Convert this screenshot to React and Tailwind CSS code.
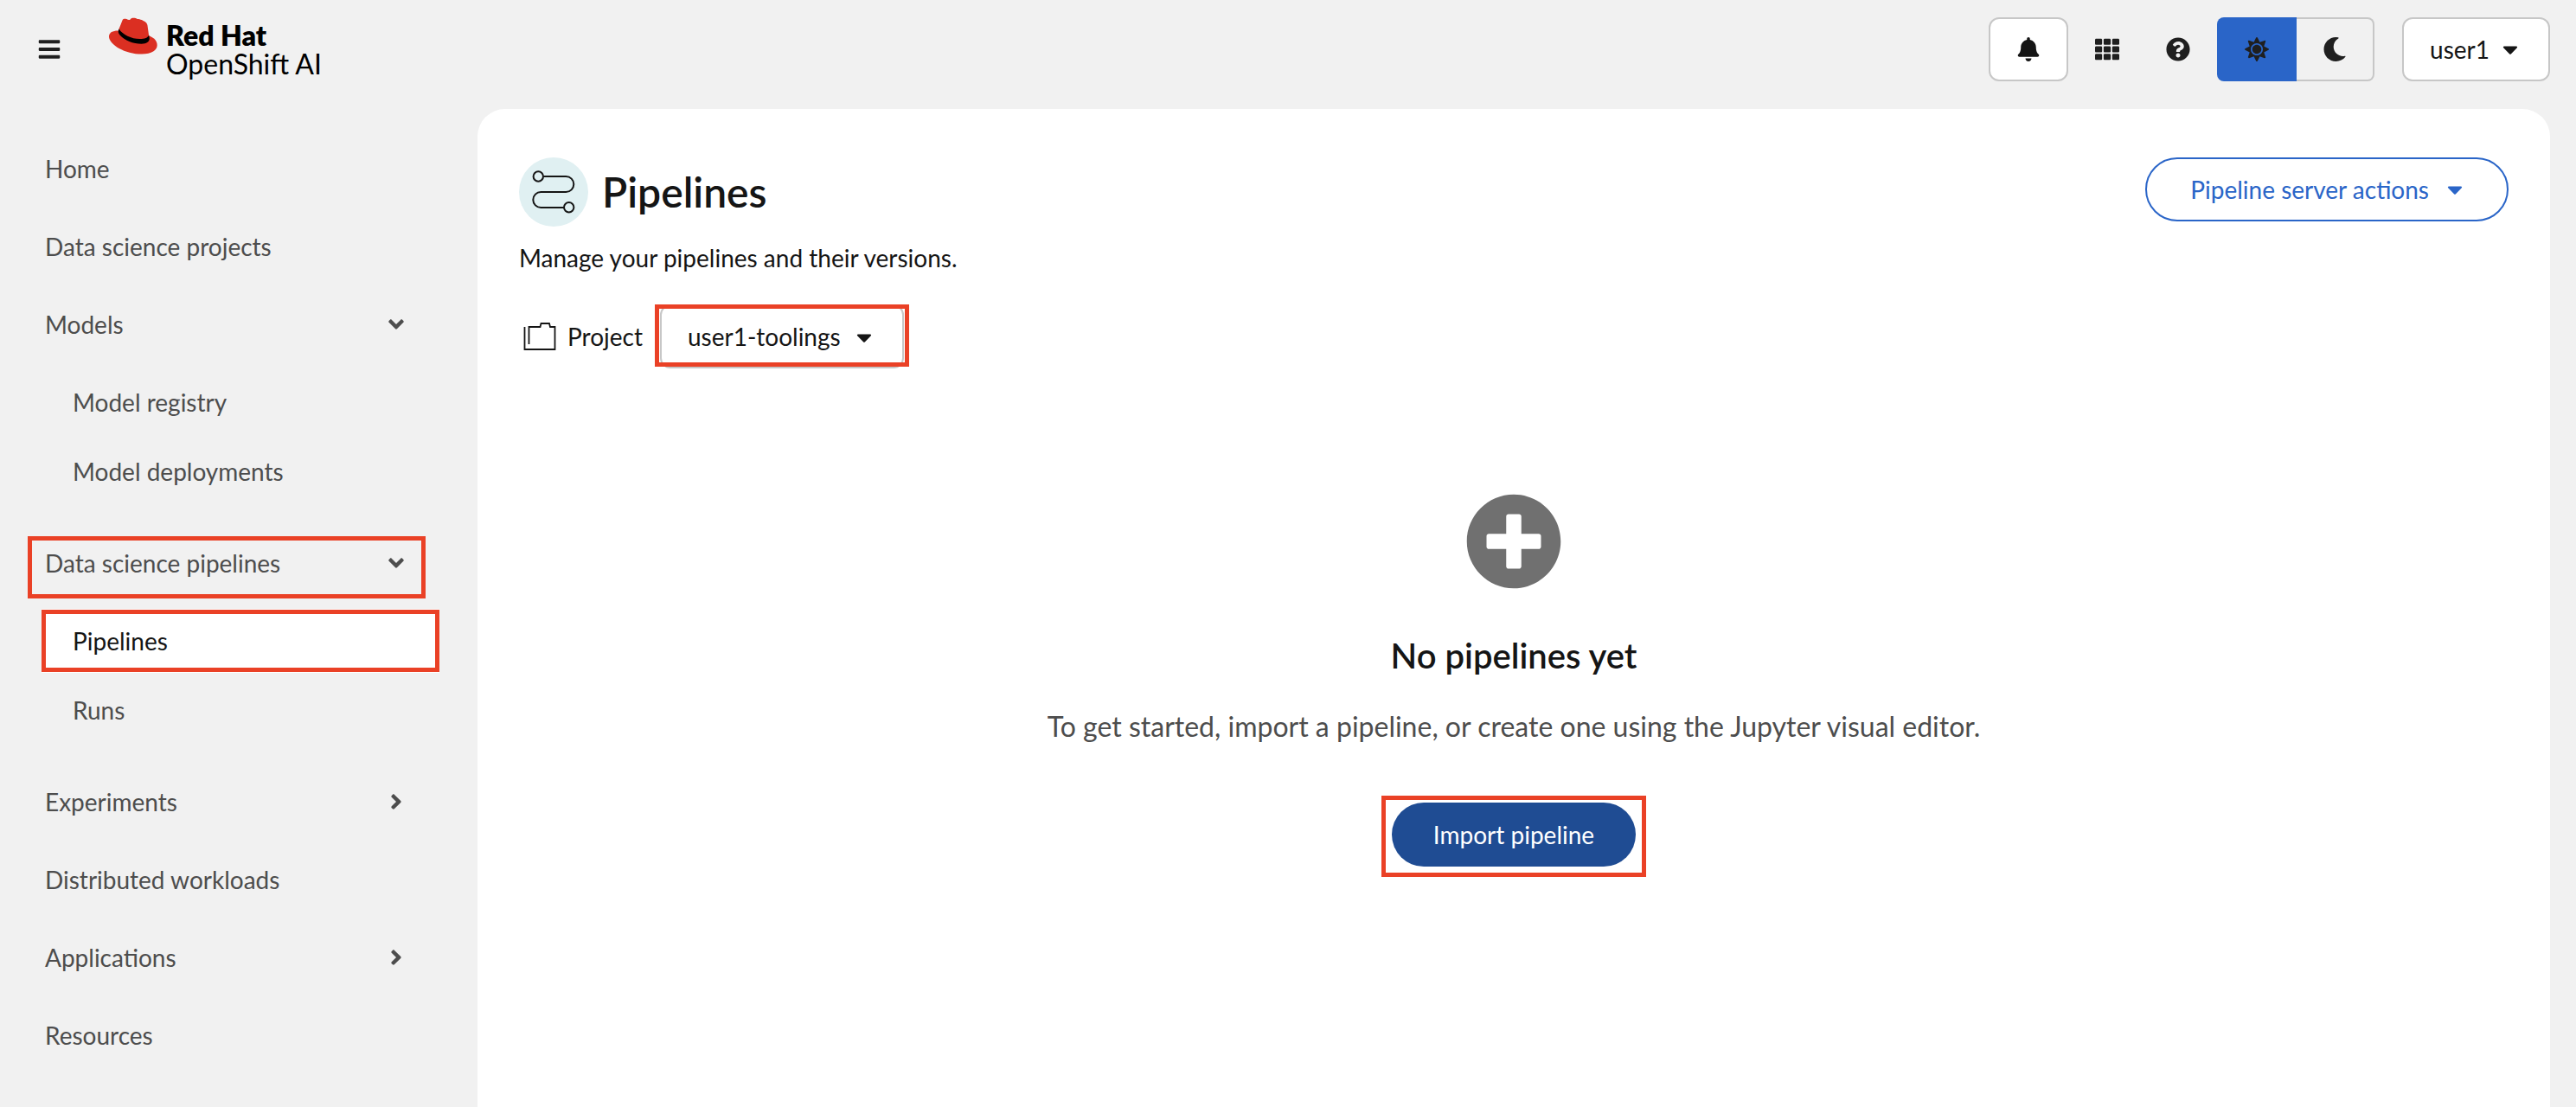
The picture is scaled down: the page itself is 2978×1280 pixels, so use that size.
import React from "react";
import {
  FaAngleDown,
  FaAngleRight,
  FaBars,
  FaBell,
  FaCaretDown,
  FaMoon,
  FaPlusCircle,
  FaQuestionCircle,
  FaSun,
  FaTh,
} from "react-icons/fa";

// Red frame drawn over an element to call attention to it.
function Highlight({ className }) {
  return (
    <span
      aria-hidden="true"
      className={`pointer-events-none absolute border-[5px] border-[#ea4126] ${className}`}
    />
  );
}

function RedHatLogo() {
  return (
    <a href="#home" className="flex gap-2.5 text-black" aria-label="Red Hat OpenShift AI">
      <svg viewBox="50 30 170 130" className="h-[43px] w-14" aria-hidden="true">
        <path
          fill="#db2f22"
          d="M84 77C66 76 50 82 50 97c0 28 56 62 115 62 35 0 54-13 54-31 0-16-11-26-27-33z"
        />
        <path
          fill="#db2f22"
          d="M84 73l8-20 5-13c4-7 10-5 15-4 5 3 8 4 12 2 3-6 9-7 16-6 5 0 7 3 10 4 4-1 8 0 11 2 5 1 9 4 14 6 6 4 9 8 10 14l5 36c0 12-10 18-25 18-35 0-70-17-81-39z"
        />
        <path
          fill="#000"
          d="M85 71c-4 7-3 15 3 21 17 19 47 31 76 31 18 0 27-7 28-18 0-4-1-8-2-13-4 10-14 14-32 14-30 0-60-15-73-35z"
        />
      </svg>
      <span className="flex flex-col pt-1 text-[32px] leading-[33px]">
        <span className="font-extrabold">Red Hat</span>
        <span>OpenShift AI</span>
      </span>
    </a>
  );
}

function Header() {
  return (
    <header className="flex items-start pt-5 pr-[30px] pb-8 pl-5 text-[#1f1f1f]">
      <button type="button" aria-label="Global navigation" className="flex h-[74px] w-[74px] items-center justify-center">
        <FaBars size={28} />
      </button>
      <div className="ml-8">
        <RedHatLogo />
      </div>
      <div className="ml-auto flex items-center">
        <button
          type="button"
          aria-label="Notifications"
          className="mr-1 flex h-[74px] w-[92px] items-center justify-center rounded-xl border-2 border-[#c7c7c7] bg-white text-[#151515]"
        >
          <FaBell size={28} />
        </button>
        <button type="button" aria-label="Application launcher" className="flex h-[74px] w-[82px] items-center justify-center">
          <FaTh size={28} />
        </button>
        <button type="button" aria-label="Help" className="mr-1 flex h-[74px] w-[82px] items-center justify-center">
          <FaQuestionCircle size={28} />
        </button>
        <div role="group" aria-label="Theme" className="flex">
          <button
            type="button"
            aria-label="Light theme"
            aria-pressed="true"
            className="flex h-[74px] w-[92px] items-center justify-center rounded-l-lg bg-[#2a65c8]"
          >
            <FaSun size={28} />
          </button>
          <button
            type="button"
            aria-label="Dark theme"
            aria-pressed="false"
            className="flex h-[74px] w-[90px] items-center justify-center rounded-r-lg border-2 border-l-0 border-[#c7c7c7]"
          >
            <FaMoon size={28} />
          </button>
        </div>
        <button
          type="button"
          aria-haspopup="menu"
          className="ml-8 flex h-[74px] items-center gap-2.5 rounded-xl border-2 border-[#c7c7c7] bg-white px-[30px] text-[#151515]"
        >
          user1
          <FaCaretDown size={28} />
        </button>
      </div>
    </header>
  );
}

function NavLink({ children, current }) {
  return (
    <a
      href="#nav"
      aria-current={current ? "page" : undefined}
      className={`relative flex h-[74px] items-center pl-9 ${current ? "bg-white text-[#151515]" : ""}`}
    >
      {children}
      {current && <Highlight className="inset-x-0 inset-y-px" />}
    </a>
  );
}

function NavGroup({ label, open, highlighted, children }) {
  return (
    <li>
      <button
        type="button"
        aria-expanded={open ? "true" : "false"}
        className="relative flex h-[74px] w-full items-center justify-between pr-9 pl-9"
      >
        {label}
        {open ? <FaAngleDown size={28} /> : <FaAngleRight size={28} />}
        {highlighted && <Highlight className="inset-x-4 top-1.5 -bottom-1" />}
      </button>
      {open && <ul className="mt-4 mb-8 flex flex-col gap-1.5 pl-8">{children}</ul>}
    </li>
  );
}

function Sidebar() {
  return (
    <nav aria-label="Main" className="w-[552px] shrink-0 pt-8 pr-11 pl-4 text-[#4d4d4d]">
      <ul className="flex flex-col">
        <li className="mb-4"><NavLink>Home</NavLink></li>
        <li className="mb-4"><NavLink>Data science projects</NavLink></li>
        <NavGroup label="Models" open>
          <li><NavLink>Model registry</NavLink></li>
          <li><NavLink>Model deployments</NavLink></li>
        </NavGroup>
        <NavGroup label="Data science pipelines" open highlighted>
          <li><NavLink current>Pipelines</NavLink></li>
          <li><NavLink>Runs</NavLink></li>
        </NavGroup>
        <NavGroup label="Experiments" />
        <li className="my-4"><NavLink>Distributed workloads</NavLink></li>
        <NavGroup label="Applications" />
        <li className="mt-4"><NavLink>Resources</NavLink></li>
      </ul>
    </nav>
  );
}

function PipelinesIcon() {
  return (
    <span className="flex size-20 items-center justify-center rounded-full bg-[#e0f0f2]">
      <svg viewBox="0 0 80 80" className="size-20" fill="none" stroke="#151515" strokeWidth="2" aria-hidden="true">
        <circle cx="22.3" cy="22" r="5.7" />
        <path d="M28.3 22H54.3a9 9 0 0 1 0 18H25.3a9 9 0 0 0 0 18H52" />
        <circle cx="57.7" cy="57.7" r="5.7" />
      </svg>
    </span>
  );
}

function ProjectIcon() {
  return (
    <svg viewBox="0 0 48 48" className="size-12" fill="none" stroke="#151515" strokeWidth="1.8" aria-hidden="true">
      <path d="M6.5 13V39H41.5V13H36L35 9H25.5L24.5 13H11.5V33" />
    </svg>
  );
}

function EmptyState() {
  return (
    <section className="mt-36 flex flex-col items-center text-center">
      <FaPlusCircle size={112} className="text-[#707070]" />
      <h2 className="mt-[50px] text-[40px] leading-[52px] font-semibold text-[#151515]">No pipelines yet</h2>
      <p className="mt-8 text-[32px] leading-[48px] text-[#4d4d4d]">
        To get started, import a pipeline, or create one using the Jupyter visual editor.
      </p>
      <button
        type="button"
        className="relative mt-16 flex h-[74px] items-center rounded-full bg-[#1f4c93] px-12 text-white"
      >
        Import pipeline
        <Highlight className="-inset-x-3 -top-2 -bottom-3" />
      </button>
    </section>
  );
}

export default function App() {
  return (
    <div className="flex min-h-screen flex-col bg-[#f1f1f1] font-['Lato',sans-serif] text-[28px] leading-10">
      <Header />
      <div className="flex flex-1">
        <Sidebar />
        <main className="mr-[30px] flex-1 rounded-t-[32px] bg-white px-12 pt-14 text-[#151515]">
          <div className="flex items-start justify-between">
            <div>
              <div className="flex items-center gap-4">
                <PipelinesIcon />
                <h1 className="text-5xl font-semibold">Pipelines</h1>
              </div>
              <p className="mt-4">Manage your pipelines and their versions.</p>
            </div>
            <button
              type="button"
              aria-haspopup="menu"
              className="flex h-[74px] items-center gap-4 rounded-full border-2 border-[#2a65c8] pr-[46px] pl-[50px] text-[#2a65c8]"
            >
              Pipeline server actions
              <FaCaretDown size={28} />
            </button>
          </div>
          <div className="mt-[34px] flex items-center">
            <ProjectIcon />
            <label htmlFor="project" className="ml-2">Project</label>
            <div className="relative ml-5">
              <select
                id="project"
                className="h-[74px] w-[282px] appearance-none rounded-xl border-2 border-[#c7c7c7] bg-white pl-[30px]"
              >
                <option>user1-toolings</option>
              </select>
              <FaCaretDown size={28} className="pointer-events-none absolute top-6 right-8" />
              <Highlight className="-inset-x-1.5 top-0 bottom-0.5" />
            </div>
          </div>
          <EmptyState />
        </main>
      </div>
    </div>
  );
}
